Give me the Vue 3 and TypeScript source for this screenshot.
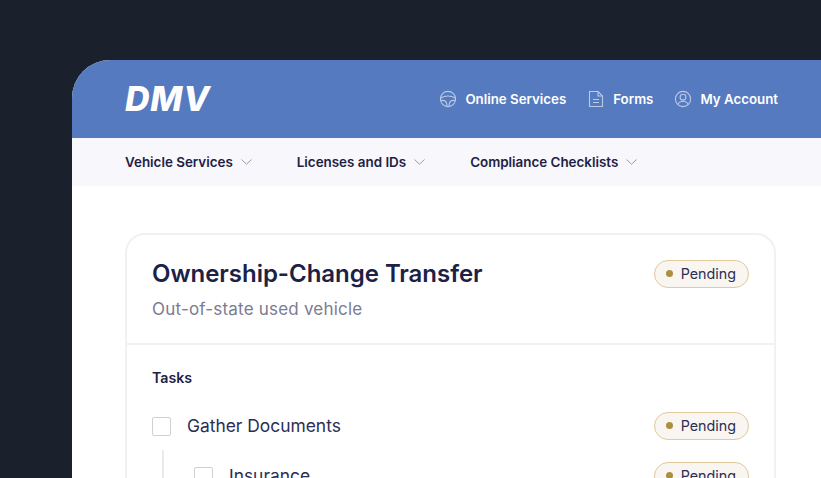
<script setup lang="ts">
const navItems = ["Vehicle Services", "Licenses and IDs", "Compliance Checklists"];
</script>

<template>
  <div class="page">
    <div class="shell">
      <header class="topbar">
        <div class="logo">DMV</div>
        <nav class="links">
          <a class="link">
            <svg class="ico" viewBox="0 0 18 18" fill="none" stroke="currentColor" stroke-width="1.1">
              <circle cx="9" cy="9" r="7.6" />
              <path d="M1.6 8.2C4 6.6 6.4 6 9 6s5 .6 7.4 2.2" />
              <path d="M1.8 10.4l3.4.2c1.6.2 2.6 1.6 2.8 5.8" />
              <path d="M16.2 10.4l-3.4.2c-1.6.2-2.6 1.6-2.8 5.8" />
            </svg>
            Online Services
          </a>
          <a class="link">
            <svg class="ico" viewBox="0 0 18 18" fill="none" stroke="currentColor" stroke-width="1.1">
              <path d="M2.500 1.500h8.500l4.500 4.500v10.500h-13z" />
              <path d="M11 1.500V6h4.500" />
              <path d="M6 9.500h6M6 12.500h6" />
            </svg>
            Forms
          </a>
          <a class="link">
            <svg class="ico" viewBox="0 0 18 18" fill="none" stroke="currentColor" stroke-width="1.1">
              <circle cx="9" cy="9" r="7.6" />
              <circle cx="9" cy="7.2" r="2.9" />
              <path d="M3.800 14.400c1-2.200 3-3.200 5.200-3.200s4.200 1 5.200 3.200" />
            </svg>
            My Account
          </a>
        </nav>
      </header>

      <div class="subnav">
        <div v-for="item in navItems" :key="item" class="subnav-item">
          {{ item }}
          <svg class="chev" viewBox="0 0 11 6" fill="none" stroke="currentColor" stroke-width="1">
            <path d="M.5.5 5.500 5.200 10.500.5" />
          </svg>
        </div>
      </div>

      <main class="content">
        <section class="card">
          <div class="card-head">
            <div>
              <h1>Ownership-Change Transfer</h1>
              <p>Out-of-state used vehicle</p>
            </div>
            <span class="badge"><i></i>Pending</span>
          </div>
          <div class="card-body">
            <h2>Tasks</h2>
            <div class="task">
              <span class="box"></span>
              <span class="task-name">Gather Documents</span>
              <span class="badge"><i></i>Pending</span>
            </div>
            <div class="subtasks">
              <div class="task">
                <span class="box"></span>
                <span class="task-name">Insurance</span>
                <span class="badge"><i></i>Pending</span>
              </div>
            </div>
          </div>
        </section>
      </main>
    </div>
  </div>
</template>

<style>
html, body { margin: 0; background: #1a202c; }
</style>

<style scoped>
.page {
  height: 478px;
  overflow: hidden;
  padding: 60px 0 0 72px;
  box-sizing: border-box;
  background: #1a202c;
  font-family: Inter, "Liberation Sans", sans-serif;
  color: #1c2145;
}
.shell {
  width: 749px;
  height: 600px;
  background: #fff;
  border-radius: 38px 0 0 0;
  overflow: hidden;
}
.topbar {
  height: 78px;
  background: #557ac0;
  display: flex;
  align-items: center;
  justify-content: space-between;
  padding: 0 43px 0 53px;
  color: #fff;
}
.logo {
  font-size: 34px;
  font-weight: 800;
  font-style: italic;
  letter-spacing: 0.8px;
  line-height: 1;
}
.links { display: flex; gap: 21px; }
.link {
  display: flex;
  align-items: center;
  gap: 8px;
  font-size: 13.300px;
  font-weight: 600;
}
.ico { width: 18px; height: 18px; color: #b9c9e6; }
.subnav {
  height: 48px;
  background: #f8f7fb;
  display: flex;
  align-items: center;
  gap: 45px;
  padding-left: 53px;
}
.subnav-item {
  display: flex;
  align-items: center;
  gap: 8px;
  font-size: 13.400px;
  font-weight: 600;
}
.chev { width: 11px; height: 6px; color: #9a9aa8; }
.content { padding: 47px 45px 0 53px; }
.card {
  border: 2px solid #f1f0f4;
  border-radius: 20px;
  width: 651px;
  box-sizing: border-box;
}
.card-head {
  display: flex;
  justify-content: space-between;
  align-items: flex-start;
  height: 110px;
  box-sizing: border-box;
  padding: 24px 25px 0 25px;
  border-bottom: 2px solid #f1f0f4;
}
.card-head .badge { margin-top: 1px; }
h1 {
  margin: 0;
  font-size: 24px;
  line-height: 30px;
  font-weight: 600;
  letter-spacing: -0.03px;
}
p {
  margin: 9px 0 0;
  font-size: 17px;
  line-height: 22px;
  letter-spacing: 0.2px;
  color: #7b7b91;
}
.card-body { padding: 24px 25px 60px 25px; }
h2 {
  margin: 0 0 25px;
  font-size: 14.200px;
  line-height: 18px;
  font-weight: 600;
}
.badge {
  display: inline-flex;
  align-items: center;
  gap: 8px;
  height: 28px;
  box-sizing: border-box;
  padding: 0 12px 1px 11px;
  border: 1px solid #e0c99b;
  border-radius: 14px;
  background: #f9f6f1;
  font-size: 14.300px;
  color: #2b2e55;
}
.badge i {
  width: 7px;
  height: 7px;
  border-radius: 50%;
  background: #ab8f3f;
}
.task {
  display: flex;
  align-items: center;
  height: 28px;
}
.task-name { flex: 1; padding-bottom: 1px; font-size: 17.400px; color: #2a2e54; }
.box {
  width: 19px;
  height: 19px;
  box-sizing: border-box;
  border: 1.500px solid #cfcfd6;
  border-radius: 2px;
  margin-right: 16px;
}
.subtasks {
  margin: 10px 0 0 10px;
  padding: 12px 0 0 30px;
  border-left: 2px solid #e9e9ee;
}
</style>
